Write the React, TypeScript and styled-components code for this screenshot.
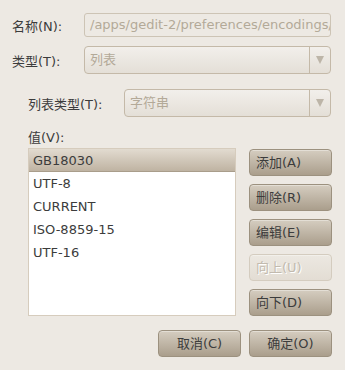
import styled, { createGlobalStyle } from "styled-components";

const encodings = ["GB18030", "UTF-8", "CURRENT", "ISO-8859-15", "UTF-16"];

const sideButtons = [
  { label: "添加(A)", disabled: false },
  { label: "删除(R)", disabled: false },
  { label: "编辑(E)", disabled: false },
  { label: "向上(U)", disabled: true },
  { label: "向下(D)", disabled: false },
];

const App = () => {
  return (
    <>
      <GlobalStyle />
      <Dialog>
        <FormGrid>
          <Label>名称(N):</Label>
          <Entry>/apps/gedit-2/preferences/encodings/auto_detected</Entry>
          <Label>类型(T):</Label>
          <Combo>
            <ComboText>列表</ComboText>
            <ComboArrow>
              <Arrow />
            </ComboArrow>
          </Combo>
        </FormGrid>

        <Section>
          <SubGrid>
            <Label>列表类型(T):</Label>
            <Combo>
              <ComboText>字符串</ComboText>
              <ComboArrow>
                <Arrow />
              </ComboArrow>
            </Combo>
          </SubGrid>

          <ValueLabel>值(V):</ValueLabel>

          <ValueBody>
            <List>
              {encodings.map((name, i) => (
                <ListRow key={name} $selected={i === 0}>
                  {name}
                </ListRow>
              ))}
            </List>

            <SideButtons>
              {sideButtons.map((b) => (
                <Button key={b.label} $disabled={b.disabled}>
                  {b.label}
                </Button>
              ))}
            </SideButtons>
          </ValueBody>
        </Section>

        <ActionArea>
          <ActionButton>取消(C)</ActionButton>
          <ActionButton>确定(O)</ActionButton>
        </ActionArea>
      </Dialog>
    </>
  );
};

const GlobalStyle = createGlobalStyle`
  html, body {
    margin: 0;
    padding: 0;
    background: #EDE9E3;
  }

  body {
    font-family: "DejaVu Sans", "Noto Sans CJK SC", sans-serif;
    font-size: 13px;
    color: #3C3C3C;
  }
`;

const Dialog = styled.div`
  width: 345px;
  height: 370px;
  box-sizing: border-box;
  padding: 13px 13px 0 12px;
  display: flex;
  flex-direction: column;
  overflow: hidden;
`;

const FormGrid = styled.div`
  display: grid;
  grid-template-columns: 72px 247px;
  row-gap: 9px;
  align-items: center;
`;

const Label = styled.div`
  white-space: nowrap;
  color: #3C3C3C;
`;

const Entry = styled.div`
  height: 24px;
  box-sizing: border-box;
  border: 1px solid #CDC4B5;
  border-radius: 3px;
  background: #EDE9E3;
  color: #B3A998;
  padding: 0 5px;
  line-height: 22px;
  white-space: nowrap;
  overflow: hidden;
`;

const Combo = styled.div`
  height: 28px;
  box-sizing: border-box;
  border: 1px solid #C4B9A8;
  border-radius: 4px;
  background: linear-gradient(#F2EFEB, #E4DFD7);
  display: flex;
  align-items: stretch;
`;

const ComboText = styled.div`
  flex: 1;
  color: #B3A998;
  padding-left: 5px;
  line-height: 26px;
`;

const ComboArrow = styled.div`
  width: 20px;
  border-left: 1px solid #C4B9A8;
  display: flex;
  align-items: center;
  justify-content: center;
`;

const Arrow = styled.div`
  width: 0;
  height: 0;
  border-left: 4px solid transparent;
  border-right: 4px solid transparent;
  border-top: 8px solid #BDB5A8;
`;

const Section = styled.div`
  margin-top: 15px;
  padding-left: 16px;
`;

const SubGrid = styled.div`
  display: grid;
  grid-template-columns: 96px 207px;
  align-items: center;
`;

const ValueLabel = styled.div`
  margin-top: 10px;
  height: 21px;
`;

const ValueBody = styled.div`
  display: flex;
  gap: 13px;
  align-items: flex-start;
`;

const List = styled.div`
  width: 208px;
  height: 168px;
  box-sizing: border-box;
  border: 1px solid #D6CCBD;
  background: #FFFFFF;
`;

const ListRow = styled.div<{ $selected?: boolean }>`
  height: 23px;
  line-height: 23px;
  padding-left: 4px;
  color: #3C3C3C;
  background: ${(p) =>
    p.$selected ? "linear-gradient(#E2DBD0, #BFB3A2)" : "transparent"};
  border-bottom: ${(p) => (p.$selected ? "1px solid #A99D8B" : "none")};
  box-sizing: border-box;
`;

const SideButtons = styled.div`
  margin-top: 1px;
  display: flex;
  flex-direction: column;
  gap: 8px;
`;

const Button = styled.div<{ $disabled?: boolean }>`
  width: 83px;
  height: 27px;
  box-sizing: border-box;
  border-radius: 4px;
  padding-left: 6px;
  line-height: 25px;
  white-space: nowrap;
  border: 1px solid ${(p) => (p.$disabled ? "#D4CCBF" : "#9C917F")};
  background: ${(p) =>
    p.$disabled
      ? "linear-gradient(#ECE8E1, #E3DDD4)"
      : "linear-gradient(#D5CDC0, #AA9E8C)"};
  color: ${(p) => (p.$disabled ? "#C2BAAE" : "#3C3C3C")};
  text-shadow: ${(p) => (p.$disabled ? "1px 1px 0 #FFFFFF" : "none")};
  box-shadow: inset 0 1px 0 rgba(255, 255, 255, 0.35);
`;

const ActionArea = styled.div`
  margin-top: 14px;
  display: flex;
  justify-content: flex-end;
  gap: 8px;
`;

const ActionButton = styled(Button)`
  padding-left: 0;
  text-align: center;
`;

export default App;
